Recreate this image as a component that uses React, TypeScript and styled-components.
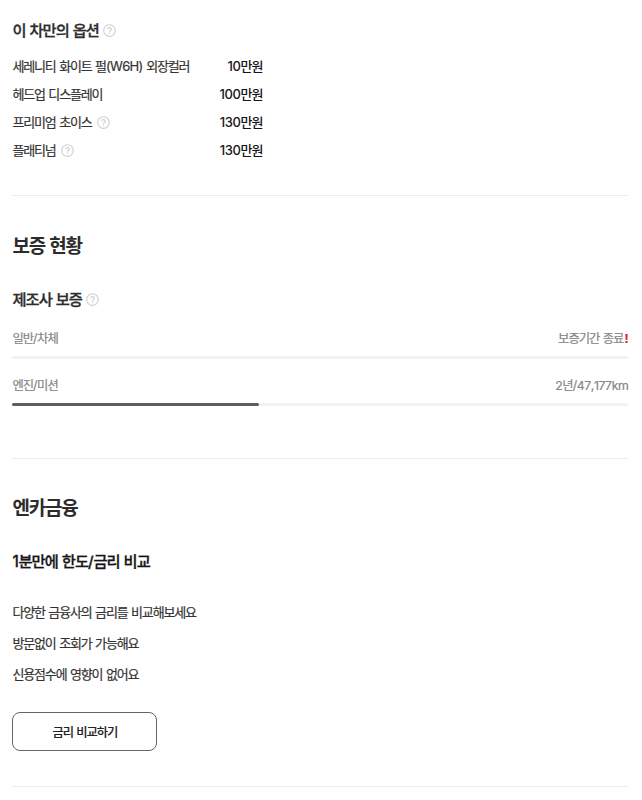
import React from 'react';
import styled, { createGlobalStyle } from 'styled-components';

const GlobalStyle = createGlobalStyle`
  * { box-sizing: border-box; }
  body {
    margin: 0;
    background: #fff;
    color: #333;
    font-family: Inter, "Noto Sans CJK KR", sans-serif;
    overflow: hidden;
  }
  h2, h3, p, ul { margin: 0; padding: 0; }
`;

const Page = styled.main`
  width: 642px;
  height: 800px;
  padding: 17px 13.6px 0 12.4px;
`;

const Section = styled.section<{ $height: number; $top: number }>`
  height: ${(p) => p.$height}px;
  padding-top: ${(p) => p.$top}px;
  border-bottom: 1px solid #ececec;
`;

/* Tightened Korean type; Latin runs carry their own tracking. */
const Type = styled.span<{
  $size: number;
  $weight: number;
  $track: number;
  $word: number;
  $stroke?: number;
}>`
  font-size: ${(p) => p.$size}px;
  font-weight: ${(p) => p.$weight};
  letter-spacing: ${(p) => p.$track}px;
  word-spacing: ${(p) => p.$word}px;
  -webkit-text-stroke: ${(p) => p.$stroke ?? 0}px currentColor;
  white-space: nowrap;
`;

const Latin = styled.span<{ $track: number }>`
  letter-spacing: ${(p) => p.$track}px;
  font-kerning: none;
`;

const styles = {
  section: { $size: 19, $weight: 700, $track: -1.2, $word: 1 },
  heading: { $size: 15.3, $weight: 500, $track: -0.92, $word: 0.7, $stroke: 0.3 },
  body: { $size: 13, $weight: 400, $track: -1.15, $word: 1, $stroke: 0.2 },
  price: { $size: 13, $weight: 500, $track: -1, $word: 0 },
  caption: { $size: 12.3, $weight: 400, $track: -1, $word: 1, $stroke: 0.2 },
  button: { $size: 12.3, $weight: 500, $track: -1.05, $word: 1, $stroke: 0.1 },
};

const latinTrack = { section: -0.4, heading: -0.3, body: -0.65, price: -0.4, caption: -0.4, button: -0.4 };

function Copy({ kind, children }: { kind: keyof typeof styles; children: string }) {
  return (
    <Type {...styles[kind]}>
      {children.split(/([A-Za-z0-9(),/]+)/).map((run, i) =>
        i % 2 ? <Latin key={i} $track={latinTrack[kind]}>{run}</Latin> : run
      )}
    </Type>
  );
}

const SectionTitle = styled.h2`
  display: flex;
  align-items: center;
  height: 28px;
  color: #2c2c2c;
`;

const Heading = styled.h3<{ $top?: number; $dark?: boolean }>`
  display: flex;
  align-items: center;
  gap: 4px;
  height: 24px;
  margin-top: ${(p) => p.$top ?? 0}px;
  color: ${(p) => (p.$dark ? '#161616' : '#2c2c2c')};
`;

const Options = styled.ul`
  width: 250px;
  margin-top: 10px;
  list-style: none;
`;

const Option = styled.li`
  display: flex;
  align-items: center;
  justify-content: space-between;
  height: 28.1px;
`;

const OptionName = styled.span`
  display: flex;
  align-items: center;
  gap: 5px;
`;

const Price = styled.strong`
  color: #161616;
`;

const HelpSvg = styled.svg`
  display: block;
  flex: none;
  margin-top: 2px;
`;

const Help = () => (
  <HelpSvg width="13" height="13" viewBox="0 0 13 13" fill="none" stroke="#d0d0d0" strokeWidth="1.15">
    <circle cx="6.5" cy="6.5" r="5.8" />
    <path d="M4.7 5.3c0-1.1.8-1.7 1.8-1.7s1.8.6 1.8 1.6c0 1.2-1.8 1.3-1.8 2.5M6.5 8.5v1.3" />
  </HelpSvg>
);

const Coverage = styled.div<{ $top: number }>`
  margin-top: ${(p) => p.$top}px;
`;

const CoverageRow = styled.div`
  display: flex;
  align-items: center;
  justify-content: space-between;
  height: 20px;
  color: #858585;
`;

const Status = styled.span`
  display: flex;
  align-items: center;
  gap: 2px;
`;

const Alert = styled.svg`
  display: block;
`;

const Track = styled.div`
  height: 3px;
  margin-top: 8px;
  border-radius: 2px;
  background: #f2f2f2;
`;

const Fill = styled.div<{ $value: number }>`
  width: ${(p) => p.$value}%;
  height: 100%;
  border-radius: 2px;
  background: #5e5e5e;
`;

const Benefits = styled.ul`
  margin-top: 24px;
  list-style: none;
`;

const Benefit = styled.li`
  display: flex;
  align-items: center;
  height: 31px;
`;

const CompareButton = styled.button`
  display: flex;
  align-items: center;
  justify-content: center;
  width: 145px;
  height: 39px;
  margin-top: 23px;
  padding: 0;
  border: 1px solid #666;
  border-radius: 8px;
  background: #fff;
  color: #222;
  font-family: inherit;
`;

const options = [
  { name: '세레니티 화이트 펄(W6H) 외장컬러', price: '10만원', help: false },
  { name: '헤드업 디스플레이', price: '100만원', help: false },
  { name: '프리미엄 초이스', price: '130만원', help: true },
  { name: '플래티넘', price: '130만원', help: true },
];

const benefits = ['다양한 금융사의 금리를 비교해보세요', '방문없이 조회가 가능해요', '신용점수에 영향이 없어요'];

export default function App() {
  return (
    <>
      <GlobalStyle />
      <Page>
        <Section $height={179} $top={0}>
          <Heading><Copy kind="heading">이 차만의 옵션</Copy><Help /></Heading>
          <Options>
            {options.map((o) => (
              <Option key={o.name}>
                <OptionName><Copy kind="body">{o.name}</Copy>{o.help && <Help />}</OptionName>
                <Price><Copy kind="price">{o.price}</Copy></Price>
              </Option>
            ))}
          </Options>
        </Section>
        <Section $height={263} $top={34}>
          <SectionTitle><Copy kind="section">보증 현황</Copy></SectionTitle>
          <Heading $top={28}><Copy kind="heading">제조사 보증</Copy><Help /></Heading>
          <Coverage $top={18}>
            <CoverageRow>
              <Copy kind="caption">일반/차체</Copy>
              <Status>
                <Copy kind="caption">보증기간 종료</Copy>
                <Alert width="3" height="9" viewBox="0 0 3 9" fill="#e0223c">
                  <path d="M.3 0h2.4l-.4 6H.7zM.4 7h2.2v2H.4z" />
                </Alert>
              </Status>
            </CoverageRow>
            <Track />
          </Coverage>
          <Coverage $top={16}>
            <CoverageRow>
              <Copy kind="caption">엔진/미션</Copy>
              <Copy kind="caption">2년/47,177km</Copy>
            </CoverageRow>
            <Track><Fill $value={40} /></Track>
          </Coverage>
        </Section>
        <Section $height={328} $top={33}>
          <SectionTitle><Copy kind="section">엔카금융</Copy></SectionTitle>
          <Heading $top={28} $dark><Copy kind="heading">1분만에 한도/금리 비교</Copy></Heading>
          <Benefits>
            {benefits.map((b) => <Benefit key={b}><Copy kind="body">{b}</Copy></Benefit>)}
          </Benefits>
          <CompareButton type="button"><Copy kind="button">금리 비교하기</Copy></CompareButton>
        </Section>
      </Page>
    </>
  );
}
